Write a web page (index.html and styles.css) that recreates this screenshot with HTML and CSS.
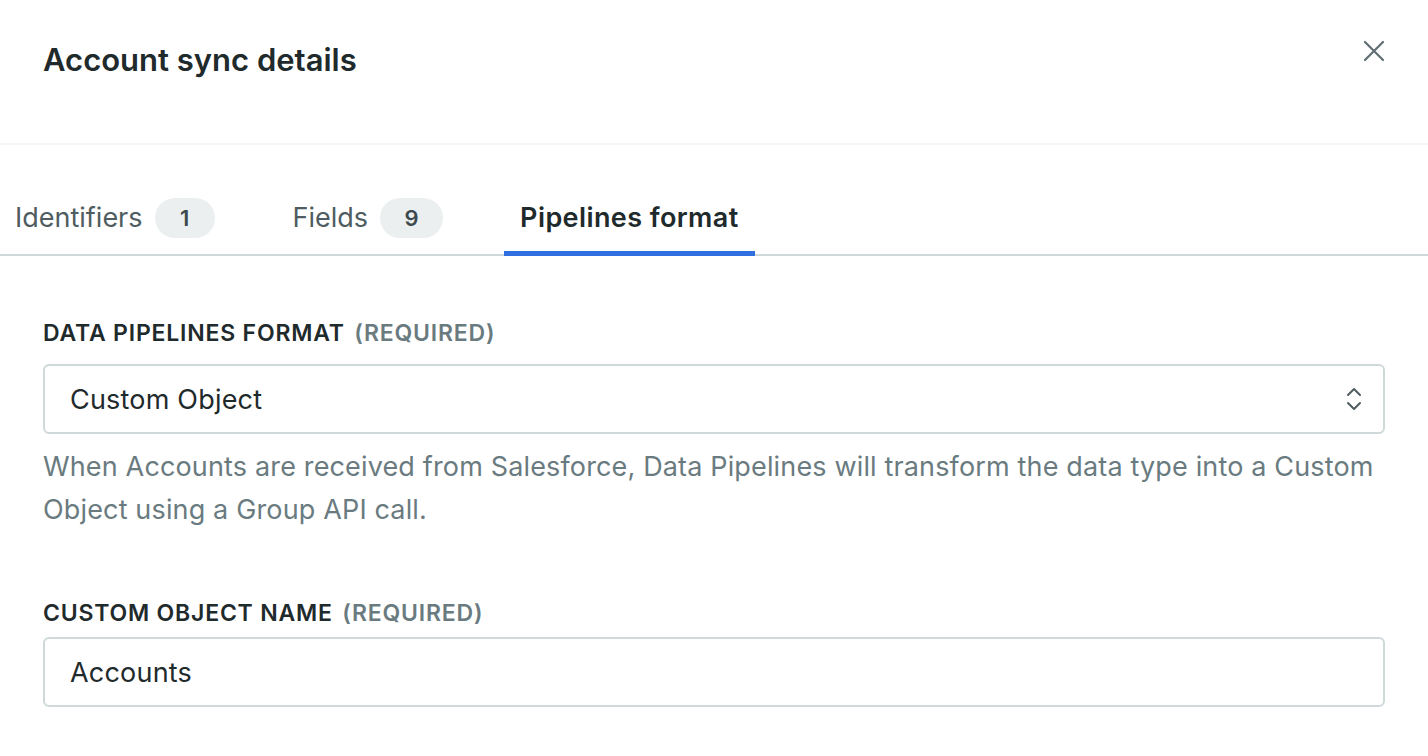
FILE: index.html
```html
<!DOCTYPE html>
<html lang="en">
<head>
  <meta charset="UTF-8" />
  <title>Account sync details</title>
  <link rel="stylesheet" href="styles.css">
</head>
<body>

  <div class="panel-header">
    <h1>Account sync details</h1>
    <button class="close-btn" aria-label="Close">
      <svg width="22" height="22" viewBox="0 0 22 22">
        <path d="M2 2 L20 20 M20 2 L2 20" stroke="#5f6e72" stroke-width="2.2" stroke-linecap="round" fill="none"/>
      </svg>
    </button>
  </div>

  <div class="tabs">
    <a class="tab" href="#">Identifiers <span class="badge">1</span></a>
    <a class="tab" href="#">Fields <span class="badge wide">9</span></a>
    <a class="tab active" href="#">Pipelines format</a>
  </div>

  <div class="form-body">
    <div class="field">
      <label>DATA PIPELINES FORMAT <span class="req">(REQUIRED)</span></label>
      <div class="select-box">
        <span>Custom Object</span>
        <svg width="16" height="24" viewBox="0 0 16 24">
          <path d="M2 8 L8 2 L14 8 M2 16 L8 22 L14 16" stroke="#4f5d61" stroke-width="2" stroke-linecap="round" stroke-linejoin="round" fill="none"/>
        </svg>
      </div>
      <p class="hint">When Accounts are received from Salesforce, Data Pipelines will transform the data type into a Custom Object using a Group API call.</p>
    </div>

    <div class="field">
      <label class="tight">CUSTOM OBJECT NAME <span class="req">(REQUIRED)</span></label>
      <div class="text-box">Accounts</div>
    </div>
  </div>

</body>
</html>
```

FILE: styles.css
```css
body {
  font-family: Inter, "Noto Sans", sans-serif;
  margin: 0;
  background-color: #fff;
  color: #1f2a2c;
}

.panel-header {
  height: 143px;
  display: flex;
  align-items: flex-start;
  justify-content: space-between;
  padding: 0 43px;
  border-bottom: 2px solid #f4f6f6;
}

.panel-header h1 {
  margin: 41px 0 0;
  font-size: 31px;
  font-weight: 600;
  color: #1f2a2c;
}

.close-btn {
  margin-top: 40px;
  background: none;
  border: none;
  padding: 0;
  cursor: pointer;
}

.tabs {
  display: flex;
  gap: 44px;
  margin-top: 38px;
  border-bottom: 2px solid #d0d9da;
  margin-left: -2px;
}

.tab {
  display: flex;
  align-items: center;
  gap: 12px;
  height: 73px;
  padding: 1px 17px 0;
  font-size: 27px;
  color: #4f5d61;
  text-decoration: none;
  box-sizing: border-box;
  border-bottom: 5px solid transparent;
  margin-bottom: -2px;
}

.tab.active {
  color: #1f2a2c;
  font-weight: 600;
  letter-spacing: 0.4px;
  padding: 1px 16px 0;
  border-bottom-color: #2f6fe0;
}

.badge {
  display: inline-flex;
  align-items: center;
  justify-content: center;
  width: 60px;
  height: 40px;
  border-radius: 20px;
  background-color: #eceff0;
  font-size: 22px;
  font-weight: 600;
  color: #3c4a4e;
}

.badge.wide {
  width: 63px;
}

.form-body {
  padding: 63px 43px 0;
}

.field {
  margin-bottom: 68px;
}

.field label {
  display: block;
  font-size: 23px;
  font-weight: 600;
  letter-spacing: 0.8px;
  color: #1f2a2c;
  margin-bottom: 17px;
}

.field label.tight {
  margin-bottom: 10px;
}

.field .req {
  color: #6a7b7f;
  margin-left: 3px;
}

.select-box,
.text-box {
  height: 70px;
  box-sizing: border-box;
  border: 2px solid #d0d9da;
  border-radius: 6px;
  display: flex;
  align-items: center;
  justify-content: space-between;
  padding: 0 21px 0 25px;
  font-size: 27px;
  letter-spacing: 0.2px;
  color: #1f2a2c;
}

.hint {
  margin: 11px 0 0;
  font-size: 27px;
  line-height: 43px;
  letter-spacing: 0.15px;
  color: #6a7b7f;
}
```
